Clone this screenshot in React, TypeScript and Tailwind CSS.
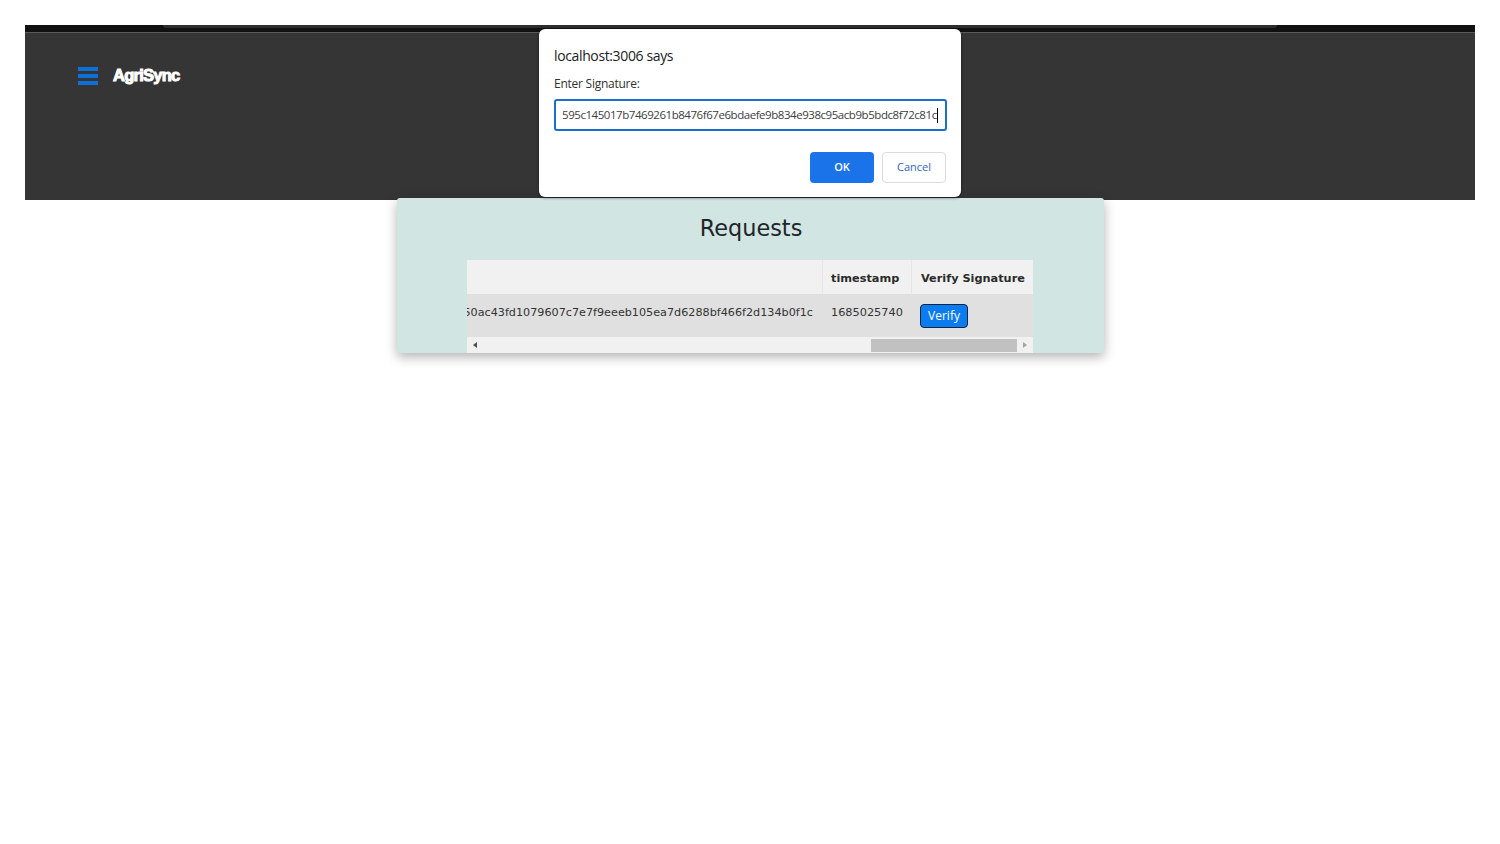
import React from "react";

const dejavu = "font-['DejaVu_Sans',sans-serif]";
const ui = "font-['Open_Sans','Noto_Sans',sans-serif]";

export default function App() {
  return (
    <div className="relative min-h-[844px] bg-white pt-[25px] px-[25px]">
      {/* dark page header */}
      <div className="h-[7px] bg-[#111111] flex pl-[138px]">
        <div className="w-[1114px] h-[3px] bg-[#2e2e2e] rounded-b-[4px]" />
      </div>
      <header className="h-[168px] bg-[#353535] border-t border-[#5a5a5a] pl-[53px] pt-[34px] flex items-start gap-[15px]">
        <div className="w-[20px] h-[18px] flex flex-col justify-between">
          <div className="h-[4px] bg-[#0f6fd8]" />
          <div className="h-[4px] bg-[#0f6fd8]" />
          <div className="h-[4px] bg-[#0f6fd8]" />
        </div>
        <span className="-mt-px font-['Liberation_Sans',sans-serif] font-bold text-[16.5px] leading-[18px] tracking-[-0.75px] text-white [-webkit-text-stroke:1px_white]">
          AgriSync
        </span>
      </header>

      {/* requests card */}
      <section className="relative -mt-[2px] w-[707px] h-[155px] ml-[372px] bg-[#d1e5e3] rounded-[3px] shadow-[0_4px_12px_rgba(0,0,0,0.3)] pl-[70px] pr-[71px]">
        <h1 className={`${dejavu} text-[22.4px] leading-[28px] pt-[16px] pl-[2px] h-[62px] box-border text-center text-[#212529]`}>
          Requests
        </h1>
        <div className={`${dejavu} w-[566px] h-[93px] flex flex-col overflow-hidden text-[#333333] text-[11.3px]`}>
          <div className="flex h-[34px] bg-[#f1f1f1] font-bold text-[#2b2b2b]">
            <div className="w-[356px] border-r border-[#e6e6e6]" />
            <div className="w-[89px] border-r border-[#e6e6e6] pl-[8px] leading-[38px]">timestamp</div>
            <div className="flex-1 pl-[9px] leading-[38px] whitespace-nowrap">Verify Signature</div>
          </div>
          <div className="flex h-[43px] bg-[#e0e0e0]">
            <div className="w-[356px] overflow-hidden flex justify-end pr-[10px] leading-[38px] text-[11.2px]">
              <span className="shrink-0 whitespace-nowrap">50ac43fd1079607c7e7f9eeeb105ea7d6288bf466f2d134b0f1c</span>
            </div>
            <div className="w-[89px] pl-[8px] leading-[38px]">1685025740</div>
            <div className="flex-1 pl-[8px] pt-[10px]">
              <button className={`${ui} block w-[48px] h-[24px] bg-[#0b7cf0] border border-[#10253f] rounded-[4px] text-white text-[12px] leading-[22px]`}>
                Verify
              </button>
            </div>
          </div>
          <div className="flex items-center h-[16px] bg-[#f1f1f1]">
            <div className="w-[16px] flex justify-center">
              <div className="border-y-[3px] border-y-transparent border-r-[4px] border-r-[#505050]" />
            </div>
            <div className="flex-1 flex justify-end">
              <div className="w-[146px] h-[13px] bg-[#c1c1c1]" />
            </div>
            <div className="w-[16px] flex justify-center">
              <div className="border-y-[3px] border-y-transparent border-l-[4px] border-l-[#a3a3a3]" />
            </div>
          </div>
        </div>
      </section>

      {/* browser prompt */}
      <div className={`${ui} absolute left-[539px] top-[29px] w-[422px] h-[168px] bg-white rounded-[6px] shadow-[0_1px_3px_rgba(0,0,0,0.5)] pl-[15px] pr-[14px] pt-[17px] text-[#202124]`}>
        <div className="text-[14px] leading-[20px] tracking-[-0.37px]">localhost:3006 says</div>
        <div className="text-[12px] leading-[16px] mt-[10px] tracking-[-0.25px] text-[#303030]">Enter Signature:</div>
        <div className="mt-[7px] h-[32px] border-2 border-[#1a6fc9] rounded-[3px] pl-[6px] flex items-center text-[11.5px] tracking-[-0.45px] text-[#3c4043] whitespace-nowrap">
          <span>595c145017b7469261b8476f67e6bdaefe9b834e938c95acb9b5bdc8f72c81c</span>
          <span className="w-px h-[15px] bg-black shrink-0" />
        </div>
        <div className="mt-[21px] pr-px flex justify-end gap-[8px] text-[11px]">
          <button className="w-[64px] h-[31px] rounded-[4px] bg-[#1a73e8] text-white font-semibold">OK</button>
          <button className="w-[64px] h-[31px] rounded-[4px] bg-white border border-[#dadce0] text-[#2b66c4] font-medium">Cancel</button>
        </div>
      </div>
    </div>
  );
}
